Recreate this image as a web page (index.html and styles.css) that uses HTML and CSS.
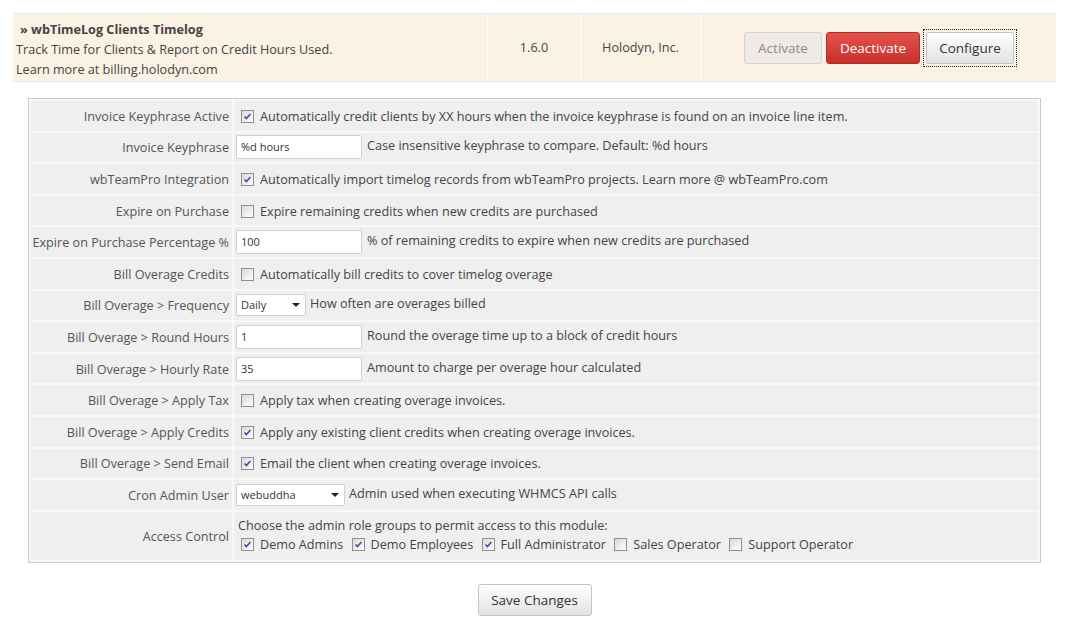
FILE: index.html
```html
<!DOCTYPE html>
<html>
<head>
<meta charset="utf-8">
<link rel="stylesheet" href="styles.css">
</head>
<body>
<div class="module">
  <div class="mcell mdesc">
    <div class="mtitle">» wbTimeLog Clients Timelog</div>
    <div>Track Time for Clients &amp; Report on Credit Hours Used.</div>
    <div>Learn more at billing.holodyn.com</div>
  </div>
  <div class="mcell mcenter">1.6.0</div>
  <div class="mcell mcenter">Holodyn, Inc.</div>
  <div class="mcell mactions">
    <button class="btn btn-disabled">Activate</button>
    <button class="btn btn-danger">Deactivate</button>
    <span class="focus"><button class="btn btn-default">Configure</button></span>
  </div>
</div>

<table class="form">
  <tr><td class="label">Invoice Keyphrase Active</td><td class="field"><span class="cb on"><svg viewBox="0 0 13 13"><path d="M3 6.5 L5.2 9 L10 3.5" /></svg></span>Automatically credit clients by XX hours when the invoice keyphrase is found on an invoice line item.</td></tr>
  <tr><td class="label">Invoice Keyphrase</td><td class="field"><span class="input">%d hours</span>Case insensitive keyphrase to compare. Default: %d hours</td></tr>
  <tr><td class="label">wbTeamPro Integration</td><td class="field"><span class="cb on"><svg viewBox="0 0 13 13"><path d="M3 6.5 L5.2 9 L10 3.5" /></svg></span>Automatically import timelog records from wbTeamPro projects. Learn more @ wbTeamPro.com</td></tr>
  <tr><td class="label">Expire on Purchase</td><td class="field"><span class="cb"></span>Expire remaining credits when new credits are purchased</td></tr>
  <tr><td class="label">Expire on Purchase Percentage %</td><td class="field"><span class="input">100</span>% of remaining credits to expire when new credits are purchased</td></tr>
  <tr><td class="label">Bill Overage Credits</td><td class="field"><span class="cb"></span>Automatically bill credits to cover timelog overage</td></tr>
  <tr><td class="label">Bill Overage &gt; Frequency</td><td class="field"><span class="select s-freq">Daily<i class="arrow"></i></span>How often are overages billed</td></tr>
  <tr><td class="label">Bill Overage &gt; Round Hours</td><td class="field"><span class="input">1</span>Round the overage time up to a block of credit hours</td></tr>
  <tr><td class="label">Bill Overage &gt; Hourly Rate</td><td class="field"><span class="input">35</span>Amount to charge per overage hour calculated</td></tr>
  <tr><td class="label">Bill Overage &gt; Apply Tax</td><td class="field"><span class="cb"></span>Apply tax when creating overage invoices.</td></tr>
  <tr><td class="label">Bill Overage &gt; Apply Credits</td><td class="field"><span class="cb on"><svg viewBox="0 0 13 13"><path d="M3 6.5 L5.2 9 L10 3.5" /></svg></span>Apply any existing client credits when creating overage invoices.</td></tr>
  <tr><td class="label">Bill Overage &gt; Send Email</td><td class="field"><span class="cb on"><svg viewBox="0 0 13 13"><path d="M3 6.5 L5.2 9 L10 3.5" /></svg></span>Email the client when creating overage invoices.</td></tr>
  <tr><td class="label">Cron Admin User</td><td class="field"><span class="select s-user">webuddha<i class="arrow"></i></span>Admin used when executing WHMCS API calls</td></tr>
  <tr class="tall"><td class="label">Access Control</td><td class="field">
    <div class="line1">Choose the admin role groups to permit access to this module:</div>
    <div class="roles">
      <span class="cb on"><svg viewBox="0 0 13 13"><path d="M3 6.5 L5.2 9 L10 3.5" /></svg></span>Demo Admins
      <span class="cb on"><svg viewBox="0 0 13 13"><path d="M3 6.5 L5.2 9 L10 3.5" /></svg></span>Demo Employees
      <span class="cb on"><svg viewBox="0 0 13 13"><path d="M3 6.5 L5.2 9 L10 3.5" /></svg></span>Full Administrator
      <span class="cb"></span>Sales Operator
      <span class="cb"></span>Support Operator
    </div>
  </td></tr>
</table>

<div class="actions">
  <button class="btn btn-default btn-save">Save Changes</button>
</div>
</body>
</html>
```

FILE: styles.css
```css
* { box-sizing: border-box; }
body {
  margin: 0;
  padding: 13px 13px 0 13px;
  font-family: "Open Sans", "Segoe UI", sans-serif;
  font-size: 12.65px;
  color: #444;
  background: #fff;
}
.module {
  display: grid;
  grid-template-columns: 474px 93px 120px 1fr;
  height: 69px;
  background: #fbf1e4;
  border-top: 1px solid #e6e6e6;
  border-bottom: 1px solid #ebe6de;
}
.mcell { border-left: 1px solid #fff; }
.mcell:first-child { border-left: none; }
.mdesc {
  padding: 5px 3px 0;
  line-height: 20px;
}
.mtitle { font-weight: bold; padding-left: 4px; }
.mcenter {
  display: flex;
  align-items: center;
  justify-content: center;
  padding-bottom: 2px;
}
.mactions {
  display: flex;
  align-items: center;
  padding-left: 43px;
  gap: 4px;
}
.btn {
  font-family: "Open Sans", "Segoe UI", sans-serif;
  font-size: 13.5px;
  height: 32px;
  border-radius: 3px;
  padding: 0 10px;
  cursor: default;
}
.btn-disabled {
  width: 78px;
  background: #eeebe6;
  border: 1px solid #d6d3ce;
  color: #8a8a8a;
}
.btn-danger {
  width: 94px;
  background: linear-gradient(#e4534c, #c7302b);
  border: 1px solid #b22c27;
  color: #fff;
}
.btn-default {
  background: linear-gradient(#ffffff, #e2e2e2);
  border: 1px solid #c4c4c4;
  color: #333;
}
.focus {
  display: inline-flex;
  padding: 2px;
  border: 1px dotted #222;
  margin-left: -1px;
}
.focus .btn {
  width: 88px;
  padding: 0;
  border-radius: 2px;
}
.form {
  margin: 16px 0 0 15px;
  width: 1013px;
  border: 1px solid #c9c9c9;
  background: #f8f8f8;
  border-spacing: 2px;
}
.form td {
  background: #efefef;
  height: 29.6px;
  padding: 0;
  vertical-align: middle;
}
.form tr.tall td { height: 48px; }
.label {
  width: 201px;
  text-align: right;
  padding-right: 3px !important;
  color: #555;
  white-space: nowrap;
}
.field {
  padding-left: 2px !important;
  white-space: nowrap;
}
.cb {
  display: inline-block;
  width: 13px;
  height: 13px;
  border: 1px solid #8f8f8f;
  background: linear-gradient(135deg, #d8d8d8, #ffffff);
  vertical-align: -2px;
  margin: 0 6px 0 5px;
  position: relative;
}
.cb svg {
  display: block;
  width: 11px;
  height: 11px;
}
.cb svg path {
  fill: none;
  stroke: #3b4ca8;
  stroke-width: 1.8;
}
.input, .select {
  display: inline-block;
  height: 24px;
  line-height: 22px;
  background: #fff;
  border: 1px solid #d0d0d0;
  border-radius: 2px;
  font-size: 11px;
  color: #333;
  padding-left: 4px;
  vertical-align: middle;
  margin-right: 5px;
}
.input { width: 126px; }
.select {
  position: relative;
  height: 22px;
  line-height: 20px;
  margin-right: 4px;
}
.s-freq { width: 70px; }
.s-user { width: 109px; }
.arrow {
  position: absolute;
  right: 5px;
  top: 8px;
  width: 0;
  height: 0;
  border-left: 4px solid transparent;
  border-right: 4px solid transparent;
  border-top: 4px solid #222;
}
.line1 { padding-left: 2px; line-height: 18px; }
.roles { line-height: 21px; }
.actions {
  display: flex;
  justify-content: center;
  margin-top: 21px;
}
.btn-save {
  width: 114px;
  padding: 0;
}
```
